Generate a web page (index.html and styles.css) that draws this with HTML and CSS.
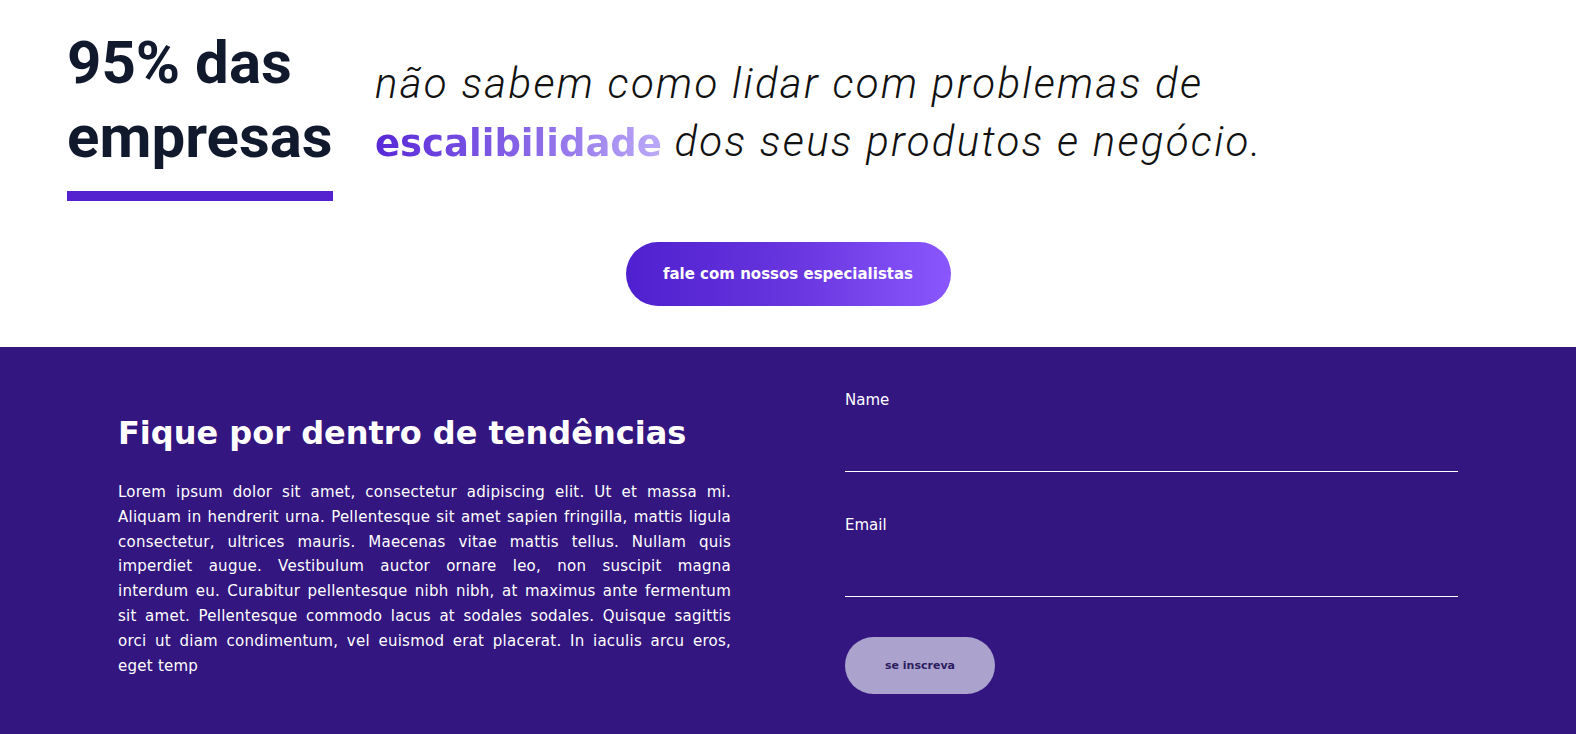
FILE: index.html
```html
<!DOCTYPE html>
<html lang="pt-BR">
<head>
<meta charset="utf-8">
<title>Escalabilidade</title>
<link rel="stylesheet" href="styles.css">
</head>
<body>
<section class="hero">
  <div class="hero-row">
    <div class="stat">
      <h1 class="stat-title">95% das<br>empresas</h1>
      <div class="stat-bar"></div>
    </div>
    <p class="tagline">não sabem como lidar com problemas de<br><strong class="grad">escalibilidade</strong> dos seus produtos e negócio.</p>
  </div>
  <div class="cta-row">
    <a class="cta" href="#">fale com nossos especialistas</a>
  </div>
</section>
<section class="news">
  <div class="news-inner">
    <div class="news-text">
      <h2 class="news-title">Fique por dentro de tendências</h2>
      <p class="news-body"><span class="ln">Lorem ipsum dolor sit amet, consectetur adipiscing elit. Ut et massa mi.</span> <span class="ln">Aliquam in hendrerit urna. Pellentesque sit amet sapien fringilla, mattis ligula</span> <span class="ln">consectetur, ultrices mauris. Maecenas vitae mattis tellus. Nullam quis</span> <span class="ln">imperdiet augue. Vestibulum auctor ornare leo, non suscipit magna</span> <span class="ln">interdum eu. Curabitur pellentesque nibh nibh, at maximus ante fermentum</span> <span class="ln">sit amet. Pellentesque commodo lacus at sodales sodales. Quisque sagittis</span> <span class="ln">orci ut diam condimentum, vel euismod erat placerat. In iaculis arcu eros,</span> <span class="ln ln-last">eget temp</span></p>
    </div>
    <form class="news-form">
      <label class="field">
        <span class="field-label">Name</span>
        <input class="field-input" type="text">
      </label>
      <label class="field">
        <span class="field-label">Email</span>
        <input class="field-input" type="email">
      </label>
      <button class="subscribe" type="button">se inscreva</button>
    </form>
  </div>
</section>
</body>
</html>
```
FILE: styles.css
```css
html, body {
  margin: 0;
  padding: 0;
}
body {
  font-family: "DejaVu Sans", "Open Sans", sans-serif;
  background: #ffffff;
}
.hero {
  padding-bottom: 41px;
}
.hero-row {
  display: flex;
  align-items: flex-start;
  padding-left: 67px;
}
.stat {
  padding-top: 26px;
  width: 266px;
}
.stat-title {
  margin: 0;
  font-family: Roboto, "Liberation Sans", sans-serif;
  font-weight: 700;
  font-size: 60px;
  line-height: 74px;
  color: #111a2d;
  white-space: nowrap;
}
.stat-bar {
  margin-top: 17px;
  height: 10px;
  background: #5522cf;
}
.tagline {
  margin: 0 0 0 42px;
  padding-top: 55px;
  font-family: Roboto, "Liberation Sans", sans-serif;
  font-weight: 300;
  font-style: italic;
  font-size: 42px;
  letter-spacing: 2.3px;
  line-height: 58px;
  color: #111111;
  white-space: nowrap;
}
.grad {
  font-family: "DejaVu Sans", sans-serif;
  font-weight: 700;
  font-style: normal;
  font-size: 37px;
  letter-spacing: 0;
  background: linear-gradient(90deg, #5828d7 0%, #8a68e8 55%, #bcaaf8 100%);
  -webkit-background-clip: text;
  background-clip: text;
  color: transparent;
}
.cta-row {
  display: flex;
  justify-content: center;
  margin-top: 41px;
}
.cta {
  display: flex;
  align-items: center;
  justify-content: center;
  width: 325px;
  height: 64px;
  border-radius: 32px;
  background: linear-gradient(90deg, #4f20cf 0%, #6a37e0 55%, #8a57ff 100%);
  color: #ffffff;
  font-weight: 700;
  font-size: 15px;
  text-decoration: none;
}
.news {
  background: #331680;
  padding: 42px 0 40px;
}
.news-inner {
  width: 1340px;
  margin: 0 auto;
  display: grid;
  grid-template-columns: 613px 613px;
  justify-content: space-between;
  align-items: start;
}
.news-text {
  padding-top: 25px;
}
.news-title {
  margin: 0;
  font-weight: 700;
  font-size: 32px;
  line-height: 38px;
  color: #ffffff;
}
.news-body {
  margin: 28px 0 0;
  font-size: 15px;
  letter-spacing: 0.25px;
  line-height: 24.8px;
  color: #ffffff;
}
.ln {
  display: block;
  text-align: justify;
  text-align-last: justify;
}
.ln-last {
  text-align-last: left;
}
.news-form {
  display: flex;
  flex-direction: column;
  align-items: flex-start;
}
.field {
  display: flex;
  flex-direction: column;
  width: 100%;
}
.field + .field {
  margin-top: 42px;
}
.field-label {
  font-size: 15px;
  line-height: 22px;
  color: #ffffff;
}
.field-input {
  box-sizing: border-box;
  height: 61px;
  margin: 0;
  padding: 0;
  border: 0;
  border-bottom: 1px solid #ffffff;
  background: transparent;
  color: #ffffff;
  font: inherit;
  outline: none;
}
.subscribe {
  margin-top: 40px;
  width: 150px;
  height: 57px;
  border: 0;
  border-radius: 29px;
  background: #aba2cd;
  color: #2c1c5f;
  font-family: "DejaVu Sans", sans-serif;
  font-weight: 700;
  font-size: 11px;
  cursor: pointer;
}
```
